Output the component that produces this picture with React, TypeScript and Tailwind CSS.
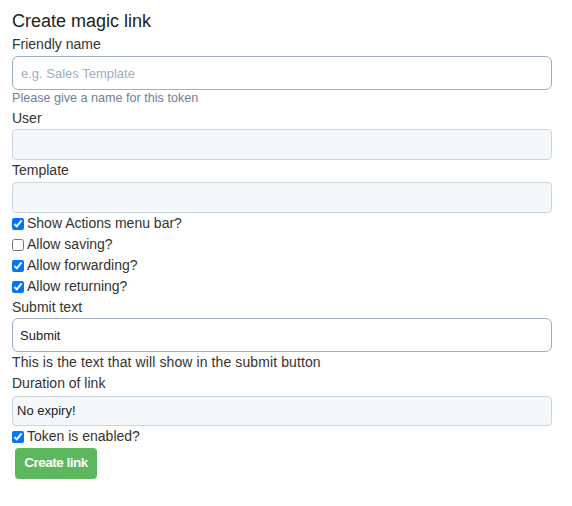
import React from 'react';

const labelCls = 'block text-[14px] leading-[20px] text-[#333]';
const grayBox =
    'block w-full rounded-[4px] border border-[#cbd5e0] bg-[#f5f8fb] text-[13px] text-[#222] outline-none';
const whiteInput =
    'block w-full rounded-[6px] border border-[#a0aec0] bg-white text-[13px] text-[#222] outline-none placeholder:text-[#a0aec0]';

const CheckRow: React.FC<{ label: string; checked?: boolean }> = ({ label, checked }) => (
    <label className="flex h-[21px] items-center text-[14px] text-[#333]">
        <input
            type="checkbox"
            defaultChecked={checked}
            className="m-0 mr-[3px] h-[12px] w-[12px] accent-[#0075ff]"
        />
        {label}
    </label>
);

export default function App() {
    return (
        <div
            className="w-[572px] min-h-[506px] bg-white px-[12px] pt-[10px] pr-[20px]"
            style={{ fontFamily: '"Liberation Sans", Arial, sans-serif' }}
        >
            <h2 className="text-[18px] leading-[22px] text-[#222]">Create magic link</h2>

            {/* Friendly name */}
            <label className={`${labelCls} mt-[2px]`}>Friendly name</label>
            <input
                className={`${whiteInput} mt-[2px] h-[34px] px-[8px]`}
                placeholder="e.g. Sales Template"
            />
            <div className="text-[12.6px] leading-[16px] text-[#718096]">
                Please give a name for this token
            </div>

            {/* User */}
            <label className={`${labelCls} mt-[2px]`}>User</label>
            <input className={`${grayBox} mt-[1px] h-[31px] px-[6px]`} />

            {/* Template */}
            <label className={labelCls}>Template</label>
            <input className={`${grayBox} mt-[2px] h-[31px] px-[6px]`} />

            <div>
                <CheckRow label="Show Actions menu bar?" checked />
                <CheckRow label="Allow saving?" />
                <CheckRow label="Allow forwarding?" checked />
                <CheckRow label="Allow returning?" checked />
            </div>

            {/* Submit text */}
            <label className={labelCls}>Submit text</label>
            <input className={`${whiteInput} mt-[1px] h-[34px] px-[7px]`} defaultValue="Submit" />
            <div className="text-[14px] leading-[20px] tracking-[0.1px] text-[#333]">
                This is the text that will show in the submit button
            </div>

            {/* Duration */}
            <label className={`${labelCls} mt-[1px]`}>Duration of link</label>
            <div className={`${grayBox} mt-[3px] flex h-[30px] items-center px-[4px]`}>
                No expiry!
            </div>

            <CheckRow label="Token is enabled?" checked />

            <button className="ml-[3px] mt-[1px] h-[31px] w-[82px] rounded-[4px] bg-[#5cb85c] text-[13.5px] font-bold tracking-[-0.5px] text-white">
                Create link
            </button>
        </div>
    );
}
